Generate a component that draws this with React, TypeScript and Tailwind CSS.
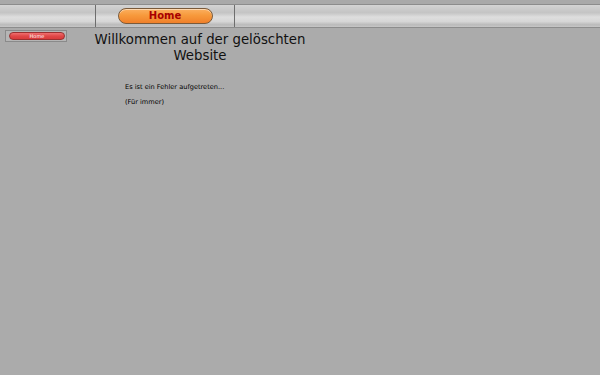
const font = { fontFamily: '"DejaVu Sans", Verdana, sans-serif' };

function NavCell({ className, children }: { className: string; children?: React.ReactNode }) {
  return (
    <div className={`flex h-full items-center justify-center border-r border-[#6e6e6e] ${className}`}>
      {children}
    </div>
  );
}

export default function App() {
  return (
    <div className="min-h-[375px] w-full bg-[#ababab] text-[#111]" style={font}>
      <div className="h-[4px] bg-[#a9a9a9]" />
      <nav className="flex h-[24px] border-y border-[#8c8c8c] bg-[linear-gradient(to_bottom,#d4d4d4_0%,#cacaca_20%,#c4c4c4_35%,#dedede_55%,#d6d6d6_75%,#bababa_90%,#c6c6c6_100%)]">
        <NavCell className="w-[96px]" />
        <NavCell className="w-[139px]">
          <a className="-mt-[1px] flex h-[16px] w-[95px] items-center justify-center rounded-full border border-[#7a5a3a] bg-[linear-gradient(to_bottom,#fbb060_0%,#f79a3c_45%,#f0802a_100%)] text-[10px] font-bold text-[#a80000] shadow-[inset_0_1px_0_rgba(255,255,255,0.5)]">
            Home
          </a>
        </NavCell>
        <div className="flex-1" />
      </nav>
      <div className="flex">
        <aside className="w-[70px] pl-[5px] pt-[2px]">
          <div className="flex h-[12px] w-[62px] items-center justify-end border border-[#8a8a8a] bg-[#b5b5b5] pr-[1px]">
            <a className="flex h-[8px] w-[56px] items-center justify-center rounded-full border border-[#9a3030] bg-[linear-gradient(to_bottom,#f07070_0%,#e04848_50%,#d83a3a_100%)] text-[5px] leading-none text-white">
              Home
            </a>
          </div>
        </aside>
        <main className="w-[260px]">
          <h1 className="pt-[4px] text-center text-[13.3px] leading-[16px]">
            Willkommen auf der gelöschten Website
          </h1>
          <div className="pl-[55px] pt-[19px] text-[6.6px] leading-[8px] text-black">
            <p>Es ist ein Fehler aufgetreten...</p>
            <p className="pt-[7px]">(Für immer)</p>
          </div>
        </main>
      </div>
    </div>
  );
}
